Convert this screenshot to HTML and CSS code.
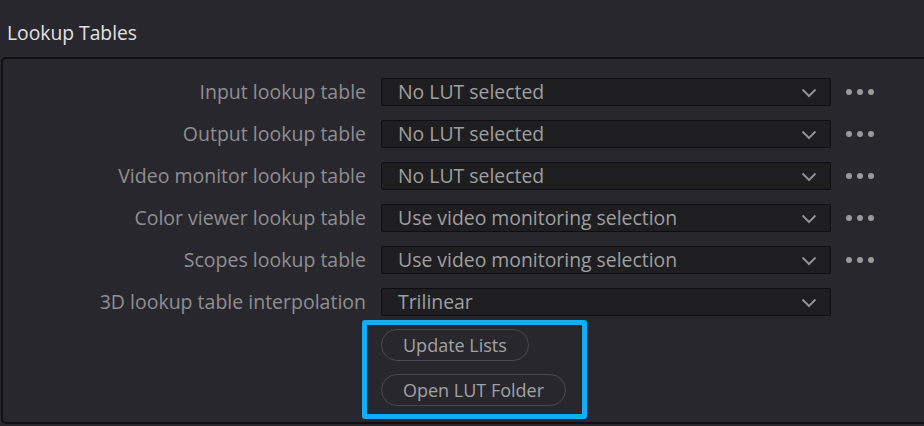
FILE: index.html
```html
<!DOCTYPE html>
<html>
<head>
<meta charset="utf-8">
<link rel="stylesheet" href="styles.css">
</head>
<body>
<div class="title">Lookup Tables</div>
<div class="panel">
  <div class="grid">
    <div class="label">Input lookup table</div>
    <div class="select"><span>No LUT selected</span><svg class="chev" width="16" height="10" viewBox="0 0 16 10"><path d="M1.5 1.5 L8 8 L14.5 1.5" fill="none" stroke="#8e8e8e" stroke-width="2"/></svg></div>
    <div class="dots"><i></i><i></i><i></i></div>

    <div class="label">Output lookup table</div>
    <div class="select"><span>No LUT selected</span><svg class="chev" width="16" height="10" viewBox="0 0 16 10"><path d="M1.5 1.5 L8 8 L14.5 1.5" fill="none" stroke="#8e8e8e" stroke-width="2"/></svg></div>
    <div class="dots"><i></i><i></i><i></i></div>

    <div class="label">Video monitor lookup table</div>
    <div class="select"><span>No LUT selected</span><svg class="chev" width="16" height="10" viewBox="0 0 16 10"><path d="M1.5 1.5 L8 8 L14.5 1.5" fill="none" stroke="#8e8e8e" stroke-width="2"/></svg></div>
    <div class="dots"><i></i><i></i><i></i></div>

    <div class="label">Color viewer lookup table</div>
    <div class="select"><span>Use video monitoring selection</span><svg class="chev" width="16" height="10" viewBox="0 0 16 10"><path d="M1.5 1.5 L8 8 L14.5 1.5" fill="none" stroke="#8e8e8e" stroke-width="2"/></svg></div>
    <div class="dots"><i></i><i></i><i></i></div>

    <div class="label">Scopes lookup table</div>
    <div class="select"><span>Use video monitoring selection</span><svg class="chev" width="16" height="10" viewBox="0 0 16 10"><path d="M1.5 1.5 L8 8 L14.5 1.5" fill="none" stroke="#8e8e8e" stroke-width="2"/></svg></div>
    <div class="dots"><i></i><i></i><i></i></div>

    <div class="label">3D lookup table interpolation</div>
    <div class="select"><span>Trilinear</span><svg class="chev" width="16" height="10" viewBox="0 0 16 10"><path d="M1.5 1.5 L8 8 L14.5 1.5" fill="none" stroke="#8e8e8e" stroke-width="2"/></svg></div>
    <div></div>

    <div></div>
    <div class="buttons">
      <div class="btn">Update Lists</div>
      <div class="btn">Open LUT Folder</div>
      <div class="highlight"></div>
    </div>
    <div></div>
  </div>
</div>
</body>
</html>
```

FILE: styles.css
```css
html, body {
  margin: 0;
  padding: 0;
  background: #28272d;
  width: 924px;
  height: 426px;
  overflow: hidden;
  font-family: "Open Sans", "Noto Sans", sans-serif;
}
.title {
  height: 57px;
  box-sizing: border-box;
  padding: 20px 0 0 7px;
  font-size: 19.3px;
  line-height: 26px;
  color: #e2e2e4;
}
.panel {
  margin-left: 1px;
  width: 940px;
  height: 367px;
  box-sizing: border-box;
  border: 2px solid #111113;
  border-radius: 5px;
  padding-top: 19px;
}
.grid {
  display: grid;
  grid-template-columns: 363px 450px 30px;
  column-gap: 15px;
  row-gap: 14px;
  align-items: center;
}
.label {
  text-align: right;
  font-size: 19.5px;
  color: #8f8f92;
  white-space: nowrap;
  line-height: 28px;
}
.select {
  height: 28px;
  box-sizing: border-box;
  background: #1e1e20;
  border: 1px solid #0e0e10;
  border-radius: 2px;
  display: flex;
  align-items: center;
  justify-content: space-between;
  padding: 0 13px 0 16px;
  font-size: 19.4px;
  color: #9e9ea0;
}
.select span { line-height: 26px; }
.chev { display: block; margin-top: 1px; }
.dots {
  display: flex;
  gap: 5px;
  align-items: center;
}
.dots i {
  display: block;
  width: 6px;
  height: 6px;
  border-radius: 50%;
  background: #9a9a9c;
}
.buttons {
  position: relative;
  display: flex;
  flex-direction: column;
  align-items: flex-start;
  gap: 13px;
  margin-top: -1px;
}
.btn {
  height: 32px;
  box-sizing: border-box;
  border: 1px solid #4a4a4e;
  border-radius: 16px;
  padding: 0 21px;
  font-size: 18px;
  line-height: 30px;
  color: #a2a2a4;
  white-space: nowrap;
}
.highlight {
  position: absolute;
  left: -19px;
  top: -9px;
  width: 225px;
  height: 99px;
  box-sizing: border-box;
  border: 5px solid #13adf5;
  border-radius: 3px;
  pointer-events: none;
}
```
